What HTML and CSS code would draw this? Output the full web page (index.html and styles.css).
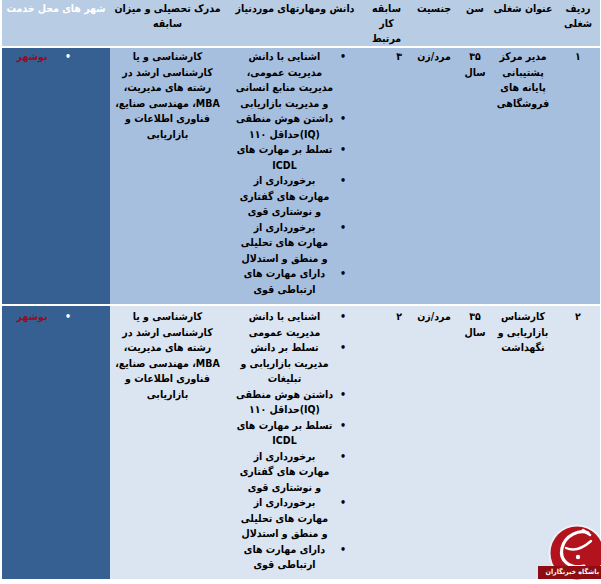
FILE: index.html
```html
<!DOCTYPE html>
<html lang="fa" dir="rtl">
<head>
<meta charset="utf-8">
<title>جدول مشاغل</title>
<link rel="stylesheet" href="styles.css">
</head>
<body>
<div class="sheet">
<table class="jobs">
  <colgroup>
    <col class="w1"><col class="w2"><col class="w3"><col class="w4"><col class="w5"><col class="w6"><col class="w7"><col class="w8">
  </colgroup>
  <thead>
    <tr class="head">
      <th>ردیف<br>شغلی</th>
      <th>عنوان شغلی</th>
      <th>سن</th>
      <th>جنسیت</th>
      <th>سابقه<br>کار<br>مرتبط</th>
      <th>دانش ومهارتهای موردنیاز</th>
      <th>مدرک تحصیلی و میزان<br>سابقه</th>
      <th class="city-head">شهر های محل خدمت</th>
    </tr>
  </thead>
  <tbody>
    <tr class="row-a">
      <td>۱</td>
      <td>مدیر مرکز<br>پشتیبانی<br>پایانه های<br>فروشگاهی</td>
      <td>۳۵<br>سال</td>
      <td>مرد/زن</td>
      <td class="exp">۳</td>
      <td class="skills">
        <ul class="blist">
          <li><span class="dot">•</span><span class="txt">اشنایی با دانش<br>مدیریت عمومی،<br>مدیریت منابع انسانی<br>و مدیریت بازاریابی</span></li>
          <li><span class="dot">•</span><span class="txt">داشتن هوش منطقی<br>(IQ)حداقل ۱۱۰</span></li>
          <li><span class="dot">•</span><span class="txt">تسلط بر مهارت های<br>ICDL</span></li>
          <li><span class="dot">•</span><span class="txt">برخورداری از<br>مهارت های گفتاری<br>و نوشتاری قوی</span></li>
          <li><span class="dot">•</span><span class="txt">برخورداری از<br>مهارت های تحلیلی<br>و منطق و استدلال</span></li>
          <li><span class="dot">•</span><span class="txt">دارای مهارت های<br>ارتباطی قوی</span></li>
        </ul>
      </td>
      <td>کارشناسی و یا<br>کارشناسی ارشد در<br>رشته های مدیریت،<br>MBA، مهندسی صنایع،<br>فناوری اطلاعات و<br>بازاریابی</td>
      <td class="city">
        <ul class="blist">
          <li><span class="dot">•</span><span class="txt">بوشهر</span></li>
        </ul>
      </td>
    </tr>
    <tr class="row-b">
      <td>۲</td>
      <td>کارشناس<br>بازاریابی و<br>نگهداشت</td>
      <td>۳۵<br>سال</td>
      <td>مرد/زن</td>
      <td class="exp">۲</td>
      <td class="skills">
        <ul class="blist">
          <li><span class="dot">•</span><span class="txt">اشنایی با دانش<br>مدیریت عمومی</span></li>
          <li><span class="dot">•</span><span class="txt">تسلط بر دانش<br>مدیریت بازاریابی و<br>تبلیغات</span></li>
          <li><span class="dot">•</span><span class="txt">داشتن هوش منطقی<br>(IQ)حداقل ۱۱۰</span></li>
          <li><span class="dot">•</span><span class="txt">تسلط بر مهارت های<br>ICDL</span></li>
          <li><span class="dot">•</span><span class="txt">برخورداری از<br>مهارت های گفتاری<br>و نوشتاری قوی</span></li>
          <li><span class="dot">•</span><span class="txt">برخورداری از<br>مهارت های تحلیلی<br>و منطق و استدلال</span></li>
          <li><span class="dot">•</span><span class="txt">دارای مهارت های<br>ارتباطی قوی</span></li>
        </ul>
      </td>
      <td>کارشناسی و یا<br>کارشناسی ارشد در<br>رشته های مدیریت،<br>MBA، مهندسی صنایع،<br>فناوری اطلاعات و<br>بازاریابی</td>
      <td class="city">
        <ul class="blist">
          <li><span class="dot">•</span><span class="txt">بوشهر</span></li>
        </ul>
      </td>
    </tr>
  </tbody>
</table>
</div>

<div class="logo">
  <svg class="logo-mark" viewBox="0 0 63 60" width="63" height="60" aria-hidden="true">
    <circle cx="39" cy="32" r="28.5" fill="#ffffff" opacity="0.5"/>
    <circle cx="39" cy="32" r="26.5" fill="#b3131c"/>
    <path d="M50 12 C42 8 27 14 24 27 C21 40 32 48 46 45" fill="none" stroke="#ffffff" stroke-width="3.2" stroke-linecap="round"/>
    <path d="M45 9 L52 14" fill="none" stroke="#ffffff" stroke-width="2.6" stroke-linecap="round"/>
    <path d="M28 27 C35 30 44 28 53 20" fill="none" stroke="#ffffff" stroke-width="2.4" stroke-linecap="round"/>
    <circle cx="40" cy="36" r="2.2" fill="#ffffff"/>
  </svg>
  <div class="logo-band">باشگاه خبرنگاران</div>
</div>
</body>
</html>
```

FILE: styles.css
```css
* {
  box-sizing: border-box;
}

html,
body {
  margin: 0;
  padding: 0;
  background: #ffffff;
}

body {
  width: 601px;
  height: 584px;
  overflow: hidden;
  position: relative;
  font-family: "DejaVu Sans Condensed", "DejaVu Sans", sans-serif;
  font-weight: bold;
  font-size: 10.5px;
  color: #000000;
}

.sheet {
  padding: 0 1px 0 2px;
}

.jobs {
  width: 598px;
  table-layout: fixed;
  border-collapse: separate;
  border-spacing: 0;
}

.w1 { width: 44px; }
.w2 { width: 66px; }
.w3 { width: 30px; }
.w4 { width: 52px; }
.w5 { width: 43px; }
.w6 { width: 140px; }
.w7 { width: 115px; }
.w8 { width: 108px; }

.jobs th,
.jobs td {
  padding: 0;
  vertical-align: top;
  text-align: center;
  white-space: nowrap;
  font-weight: bold;
  border-bottom: 2px solid #ffffff;
}

.head th {
  height: 45px;
  padding-top: 1px;
  line-height: 15px;
  background: #b8cce4;
}

.head .city-head {
  color: #ffffff;
}

.jobs td {
  line-height: 15.5px;
}

.row-a td {
  background: #a7bfde;
  padding-top: 1px;
  padding-bottom: 7px;
}

.row-b td {
  background: #dbe5f1;
  padding-top: 3px;
  padding-bottom: 6px;
}

.jobs td.exp {
  text-align: right;
  padding-right: 6px;
}

.row-a td.city,
.row-b td.city {
  background: #366092;
}

.blist {
  list-style: none;
  margin: 0;
  padding: 0;
}

.blist li {
  display: flex;
  align-items: flex-start;
}

.skills .blist {
  padding-right: 18px;
  padding-left: 11px;
}

.dot {
  width: 8px;
  flex: none;
  text-align: center;
}

.txt {
  flex: 1;
  text-align: center;
}

.skills .txt {
  margin-right: 6px;
}

.city .blist {
  padding-right: 38px;
  padding-left: 4px;
}

.city .dot {
  color: #ffffff;
}

.city .txt {
  margin-right: 6px;
  color: #9b0a1a;
}

.logo {
  position: absolute;
  left: 538px;
  top: 521px;
  width: 63px;
  height: 60px;
}

.logo-mark {
  display: block;
}

.logo-band {
  position: absolute;
  left: 0;
  right: 0;
  top: 45px;
  height: 13px;
  background: #8d0d12;
  color: #ffffff;
  font-size: 7px;
  line-height: 13px;
  text-align: right;
  padding-right: 2px;
  white-space: nowrap;
  overflow: hidden;
}
```
